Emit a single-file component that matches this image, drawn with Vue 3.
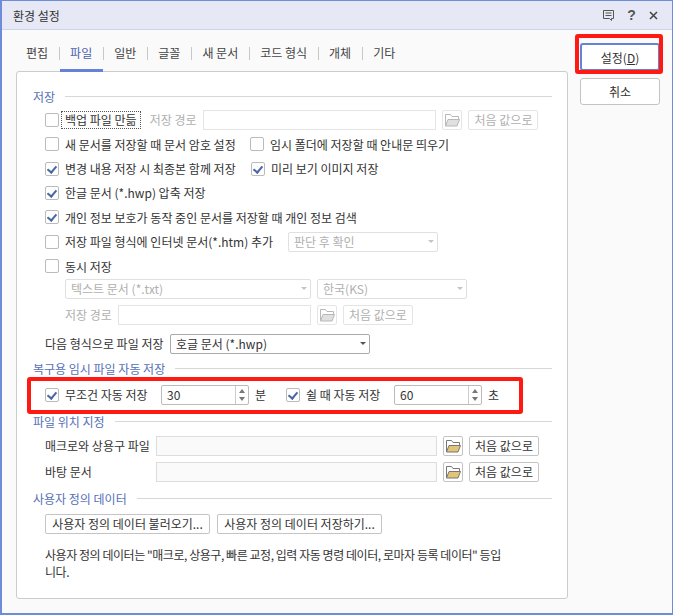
<script setup>
const tabs = ['편집', '파일', '일반', '글꼴', '새 문서', '코드 형식', '개체', '기타']
const activeTab = '파일'
</script>

<template>
  <div class="window">
    <svg class="defs" width="0" height="0">
      <symbol id="folder" viewBox="0 0 20 20">
        <path class="f-back" d="M3.5 16V4.5h5l1.5 2h6.5V9" />
        <path class="f-front" d="M3.5 16 6 9.5h11.5L15 16z" />
      </symbol>
    </svg>

    <header class="titlebar">
      <span class="title">환경 설정</span>
      <div class="title-icons">
        <svg width="13" height="13" viewBox="0 0 13 13">
          <path d="M1.5 1.5h10v8h-2v2l-2-2h-6z" fill="none" stroke="#555" stroke-width="1" />
          <path d="M3.5 4h6M3.5 6.5h6" stroke="#555" stroke-width="1" />
        </svg>
        <span class="help">?</span>
        <svg width="11" height="11" viewBox="0 0 11 11">
          <path d="M2 2l7 7M9 2l-7 7" stroke="#444" stroke-width="1.5" />
        </svg>
      </div>
    </header>

    <div class="content">
      <div class="main">
        <nav class="tabs">
          <template v-for="(tab, i) in tabs" :key="tab">
            <span v-if="i > 0" class="tab-sep"></span>
            <span class="tab" :class="{ active: tab === activeTab }">{{ tab }}</span>
          </template>
        </nav>

        <div class="panel">
          <div class="head"><span>저장</span><i></i></div>

          <div class="row first">
            <span class="check"></span>
            <span class="label focus">백업 파일 만듦</span>
            <span class="muted path-label">저장 경로</span>
            <span class="input off w-233"></span>
            <span class="folder-btn off"><svg width="20" height="20"><use href="#folder" /></svg></span>
            <span class="btn off">처음 값으로</span>
          </div>
          <div class="row">
            <span class="check"></span>
            <span class="label w-185">새 문서를 저장할 때 문서 암호 설정</span>
            <span class="check"></span>
            <span class="label">임시 폴더에 저장할 때 안내문 띄우기</span>
          </div>
          <div class="row">
            <span class="check on"></span>
            <span class="label w-186">변경 내용 저장 시 최종본 함께 저장</span>
            <span class="check on"></span>
            <span class="label">미리 보기 이미지 저장</span>
          </div>
          <div class="row">
            <span class="check on"></span>
            <span class="label">한글 문서 (*.hwp) 압축 저장</span>
          </div>
          <div class="row">
            <span class="check on"></span>
            <span class="label">개인 정보 보호가 동작 중인 문서를 저장할 때 개인 정보 검색</span>
          </div>
          <div class="row">
            <span class="check"></span>
            <span class="label w-223">저장 파일 형식에 인터넷 문서(*.htm) 추가</span>
            <span class="select off w-150">판단 후 확인</span>
          </div>
          <div class="row">
            <span class="check"></span>
            <span class="label">동시 저장</span>
          </div>

          <div class="sub indent">
            <span class="select off w-246">텍스트 문서 (*.txt)</span>
            <span class="select off w-150">한국(KS)</span>
          </div>
          <div class="sub indent gap-6">
            <span class="muted">저장 경로</span>
            <span class="input off w-193"></span>
            <span class="folder-btn off"><svg width="20" height="20"><use href="#folder" /></svg></span>
            <span class="btn off">처음 값으로</span>
          </div>
          <div class="sub side gap-9">
            <span class="w-125">다음 형식으로 파일 저장</span>
            <span class="select w-200">호글 문서 (*.hwp)</span>
          </div>

          <div class="head gap-5"><span>복구용 임시 파일 자동 저장</span><i></i></div>
          <div class="sub side gap-6">
            <span class="check on"></span>
            <span class="label w-96">무조건 자동 저장</span>
            <span class="spin"><b>30</b><em></em></span>
            <span class="unit w-31">분</span>
            <span class="check on"></span>
            <span class="label w-88">쉴 때 자동 저장</span>
            <span class="spin"><b>60</b><em></em></span>
            <span class="unit">초</span>
          </div>

          <div class="head gap-7"><span>파일 위치 지정</span><i></i></div>
          <div class="sub side gap-4">
            <span class="w-111">매크로와 상용구 파일</span>
            <span class="input w-281"></span>
            <span class="folder-btn"><svg width="20" height="20"><use href="#folder" /></svg></span>
            <span class="btn">처음 값으로</span>
          </div>
          <div class="sub side gap-6">
            <span class="w-111">바탕 문서</span>
            <span class="input w-281"></span>
            <span class="folder-btn"><svg width="20" height="20"><use href="#folder" /></svg></span>
            <span class="btn">처음 값으로</span>
          </div>

          <div class="head gap-7"><span>사용자 정의 데이터</span><i></i></div>
          <div class="sub data-btns gap-5">
            <span class="btn wide">사용자 정의 데이터 불러오기...</span>
            <span class="btn wide">사용자 정의 데이터 저장하기...</span>
          </div>
          <p class="note">사용자 정의 데이터는 "매크로, 상용구, 빠른 교정, 입력 자동 명령 데이터, 로마자 등록 데이터" 등입니다.</p>
        </div>
      </div>

      <aside class="actions">
        <button class="action primary">설정(<u>D</u>)</button>
        <button class="action">취소</button>
      </aside>
    </div>

    <div class="mark mark-ok"></div>
    <div class="mark mark-row"></div>
  </div>
</template>

<style>
html, body {
  margin: 0;
  background: #fff;
}
</style>

<style scoped>
.window {
  position: relative;
  box-sizing: border-box;
  width: 673px;
  height: 615px;
  border: solid #6f8cd8;
  border-width: 1px 1px 2px 2px;
  background: #fafafa;
  font-family: "Noto Sans CJK KR", "Noto Sans", sans-serif;
  font-size: 12px;
  color: #333;
  overflow: hidden;
}
.defs {
  position: absolute;
}
.titlebar {
  display: flex;
  align-items: center;
  justify-content: space-between;
  height: 28px;
  padding: 0 13px 0 11px;
  background: #e6e9f5;
  border-bottom: 1px solid #d0d4e8;
}
.title {
  font-size: 12px;
  color: #333;
}
.title-icons {
  display: flex;
  align-items: center;
  gap: 10px;
}
.help {
  width: 13px;
  text-align: center;
  font-family: "Liberation Sans", sans-serif;
  font-size: 14px;
  font-weight: bold;
  color: #555;
}
.content {
  display: flex;
}
.main {
  width: 552px;
  margin-left: 14px;
}
.tabs {
  display: flex;
  align-items: center;
  height: 42px;
  position: relative;
  z-index: 1;
}
.tab {
  height: 42px;
  line-height: 46px;
  padding: 0 10.5px;
  box-sizing: border-box;
  color: #444;
  white-space: nowrap;
}
.tab:first-child {
  padding-left: 10px;
}
.tab.active {
  color: #4a63b0;
  border-bottom: 3px solid #6582d6;
  height: 42px;
}
.tab-sep {
  width: 1px;
  height: 13px;
  margin-top: 4px;
  background: #c8c8c8;
}
.panel {
  box-sizing: border-box;
  height: 528px;
  margin-top: -1px;
  padding: 14px 15px 0 16px;
  background: #fff;
  border: 1px solid #ccc;
  border-radius: 3px;
}
.head {
  display: flex;
  align-items: center;
  height: 20px;
  gap: 10px;
  color: #5570b8;
  white-space: nowrap;
}
.head i {
  flex: 1;
  height: 1px;
  background: #d8d8d8;
}
.row {
  display: flex;
  align-items: center;
  height: 24.4px;
  padding-left: 12px;
}
.row.first {
  margin-top: 1.6px;
}
.row + .sub {
  margin-top: 0.4px;
}
.sub {
  display: flex;
  align-items: center;
  height: 20px;
  white-space: nowrap;
}
.indent {
  padding-left: 32px;
  gap: 6px;
}
.indent .folder-btn,
.indent .btn {
  margin-left: 0;
}
.side {
  padding-left: 12px;
}
.data-btns {
  padding-left: 12px;
  gap: 7px;
}
.gap-4 { margin-top: 4px; }
.gap-5 { margin-top: 5px; }
.gap-6 { margin-top: 6px; }
.gap-7 { margin-top: 7px; }
.gap-9 { margin-top: 9px; }
.check {
  position: relative;
  flex: none;
  box-sizing: border-box;
  width: 14px;
  height: 14px;
  margin-right: 6px;
  border: 1px solid #bbb;
  border-radius: 2px;
  background: #fff;
}
.check.on::after {
  content: "";
  position: absolute;
  left: 3px;
  top: 1px;
  width: 4px;
  height: 7px;
  border: solid #4a66a8;
  border-width: 0 2px 2px 0;
  transform: rotate(40deg);
}
.label {
  white-space: nowrap;
}
.focus {
  margin-left: -3px;
  padding: 0 3px;
  line-height: 16px;
  outline: 1px dotted #555;
}
.muted {
  color: #b0b0b0;
}
.path-label {
  margin-left: 10px;
  margin-right: 7px;
}
.input {
  flex: none;
  box-sizing: border-box;
  height: 20px;
  background: #fafafa;
  border: 1px solid #ddd;
}
.input.off {
  background: #fff;
  border-color: #e4e4e4;
}
.folder-btn {
  flex: none;
  display: inline-flex;
  box-sizing: border-box;
  width: 20px;
  height: 20px;
  margin-left: 6px;
  border: 1px solid #c4c4c4;
  border-radius: 2px;
  background: #fff;
  --back: #777;
  --fill: #e3c477;
}
.folder-btn svg {
  margin: -1px;
}
.folder-btn.off {
  border-color: #e6e6e6;
  --back: #b8b8b8;
  --fill: #e0e0e0;
}
.f-back {
  fill: #fff;
  stroke: var(--back);
}
.f-front {
  fill: var(--fill);
  stroke: var(--back);
}
.btn {
  flex: none;
  box-sizing: border-box;
  display: inline-block;
  width: 70px;
  height: 20px;
  margin-left: 6px;
  line-height: 17px;
  text-align: center;
  background: #fff;
  border: 1px solid #c4c4c4;
  border-radius: 2px;
  color: #333;
}
.btn.off {
  color: #b0b0b0;
  border-color: #e4e4e4;
}
.btn.wide {
  margin-left: 0;
  width: 165px;
  white-space: nowrap;
}
.select {
  position: relative;
  flex: none;
  box-sizing: border-box;
  height: 20px;
  padding-left: 5px;
  line-height: 17px;
  background: #fff;
  border: 1px solid #aaa;
  border-radius: 2px;
}
.select::after {
  content: "";
  position: absolute;
  right: 3px;
  top: 7px;
  border: 3px solid transparent;
  border-bottom: 0;
  border-top-color: #555;
}
.select.off {
  color: #b0b0b0;
  border-color: #e0e0e0;
}
.select.off::after {
  border-top-color: #c4c4c4;
}
.spin {
  position: relative;
  flex: none;
  box-sizing: border-box;
  width: 88px;
  height: 20px;
  padding-left: 5px;
  line-height: 17px;
  background: #fff;
  border: 1px solid #bbb;
  border-radius: 2px;
}
.spin b {
  font-weight: 400;
}
.spin em {
  position: absolute;
  right: 0;
  top: 0;
  bottom: 0;
  width: 12px;
  border-left: 1px solid #ccc;
}
.spin em::before,
.spin em::after {
  content: "";
  position: absolute;
  left: 3px;
  width: 0;
  height: 0;
  border-style: solid;
}
.spin em::before {
  top: 3px;
  border-width: 0 3px 4px;
  border-color: transparent transparent #777;
}
.spin em::after {
  bottom: 3px;
  border-width: 4px 3px 0;
  border-color: #777 transparent transparent;
}
.unit {
  margin-left: 6px;
}
.w-31 { width: 31px; flex: none; }
.w-88 { width: 88px; flex: none; }
.w-96 { width: 96px; flex: none; }
.w-111 { width: 111px; flex: none; }
.w-125 { width: 125px; flex: none; }
.w-150 { width: 150px; }
.w-185 { width: 185px; flex: none; }
.w-186 { width: 186px; flex: none; }
.w-193 { width: 193px; }
.w-200 { width: 200px; }
.w-223 { width: 223px; flex: none; }
.w-233 { width: 233px; }
.w-246 { width: 246px; }
.w-281 { width: 281px; }
.note {
  width: 460px;
  margin: 12px 0 0 12px;
  line-height: 17px;
  letter-spacing: -0.45px;
  word-break: break-all;
}
.actions {
  display: flex;
  flex-direction: column;
  gap: 7px;
  margin: 13px 0 0 12px;
}
.action {
  box-sizing: border-box;
  width: 80px;
  height: 27px;
  padding: 0;
  font: inherit;
  color: #333;
  background: #fff;
  border: 1px solid #c4c4c4;
  border-radius: 3px;
}
.action.primary {
  height: 28px;
  border: 2px solid #6582d6;
}
.mark {
  position: absolute;
  box-sizing: border-box;
  border: 4px solid #fe1a12;
  border-radius: 3px;
  pointer-events: none;
}
.mark-ok {
  left: 573px;
  top: 33px;
  width: 88px;
  height: 40px;
}
.mark-row {
  left: 25px;
  top: 376px;
  width: 496px;
  height: 37px;
}
</style>
